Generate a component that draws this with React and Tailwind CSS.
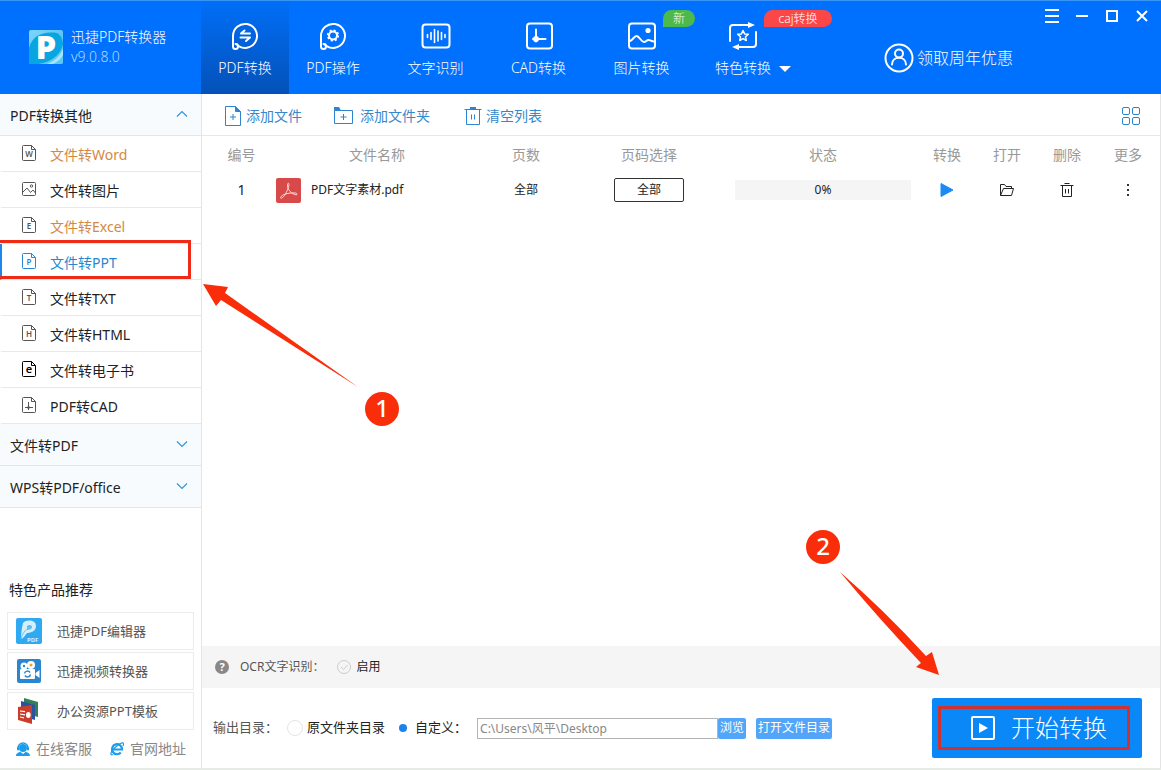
import { useState } from 'react'
import clsx from 'clsx'

const tools = [
  { name: '文件转Word', mark: 'W', hot: true },
  { name: '文件转图片', mark: 'image' },
  { name: '文件转Excel', mark: 'E', hot: true },
  { name: '文件转PPT', mark: 'P' },
  { name: '文件转TXT', mark: 'T' },
  { name: '文件转HTML', mark: 'H' },
  { name: '文件转电子书', mark: 'e', dark: true },
  { name: 'PDF转CAD', mark: 'cad' },
]

const products = [
  { name: '迅捷PDF编辑器', icon: EditorLogo },
  { name: '迅捷视频转换器', icon: VideoLogo },
  { name: '办公资源PPT模板', icon: TemplateLogo },
]

const tabs = [
  { name: 'PDF转换', icon: ConvertIcon, width: 'w-[88px]' },
  { name: 'PDF操作', icon: OperateIcon, width: 'w-[88px]' },
  { name: '文字识别', icon: OcrIcon, width: 'w-[103px] ml-[7px]' },
  { name: 'CAD转换', icon: CadIcon, width: 'w-[103px]' },
  { name: '图片转换', icon: PictureIcon, width: 'w-[103px]', badge: '新', badgeClass: 'left-[73px] w-8 bg-[#4cb94a]' },
  { name: '特色转换', icon: StarIcon, width: 'w-[100px]', badge: 'caj转换', badgeClass: 'left-[71px] w-[68px] bg-[#fb4747]', caret: true },
]

/* Header icons */

function TabSvg({ children }) {
  return (
    <svg width="30" height="30" viewBox="0 0 30 30" fill="none" stroke="white" strokeWidth="2" strokeLinecap="round" strokeLinejoin="round">
      {children}
    </svg>
  )
}

function ConvertIcon() {
  return (
    <TabSvg>
      <path d="M3 15A12 12 0 1 1 9 25.3C8 24.7 7.5 24 7 23.3" />
      <path d="M3 15v10.500a2.500 2.500 0 0 0 5 0c0-1.500-1-2.500-2.500-2.500" />
      <path d="M20 12.500H11l3.500-3M10.500 16.500h9.500l-4 3.500" />
    </TabSvg>
  )
}

function OperateIcon() {
  return (
    <TabSvg>
      <path d="M3 15A12 12 0 1 1 9 25.3C8 24.7 7.500 24 7 23.300" />
      <path d="M3 15v10.500a2.500 2.500 0 0 0 5 0c0-1.500-1-2.500-2.500-2.500" />
      <circle cx="15" cy="14.500" r="4" />
      <circle cx="15" cy="14.500" r="5.300" strokeWidth="1.600" strokeLinecap="butt" strokeDasharray="2.080 2.080" />
    </TabSvg>
  )
}

function OcrIcon() {
  return (
    <TabSvg>
      <rect x="1.500" y="3.500" width="27" height="23" rx="3" />
      <path d="M6.500 13.500v3M10 11.500v7M13.500 8.500v13M17 10v10M20.500 11.500v7M24 13.500v3" strokeWidth="1.600" />
    </TabSvg>
  )
}

function CadIcon() {
  return (
    <TabSvg>
      <rect x="3" y="2.500" width="25" height="25" rx="3" />
      <path d="M12 8.500v12M9 18h12.500" />
      <circle cx="12" cy="18" r="3" fill="white" stroke="none" />
    </TabSvg>
  )
}

function PictureIcon() {
  return (
    <TabSvg>
      <rect x="2" y="2.500" width="26" height="25" rx="3" />
      <path d="M3 20c3-1 4-5 6.500-5 3 0 4.500 6 7.500 6 2 0 2.500-2 4.500-2s3 1.500 5.500 1.500" />
      <circle cx="21" cy="9.500" r="2.600" fill="white" stroke="none" />
    </TabSvg>
  )
}

function StarIcon() {
  return (
    <TabSvg>
      <path d="M2 20V7a3 3 0 0 1 3-3h17M28 11v12a3 3 0 0 1-3 3H9" />
      <path d="M20 1l7 3-7 3zM11 23l-7 3 7 3z" fill="white" stroke="none" />
      <path d="M15 9.500l1.600 3.400 3.700.4-2.800 2.500.800 3.700-3.300-1.900-3.300 1.900.800-3.700-2.800-2.500 3.700-.4z" strokeWidth="1.500" />
    </TabSvg>
  )
}

function AppLogo() {
  return (
    <svg width="34" height="34" viewBox="0 0 34 34" className="shrink-0">
      <defs>
        <linearGradient id="appLogo" x1="0" y1="0" x2="1" y2="1">
          <stop offset="0" stopColor="#7fd6fa" />
          <stop offset="1" stopColor="#41b6f2" />
        </linearGradient>
      </defs>
      <rect width="34" height="34" rx="2" fill="url(#appLogo)" />
      <path d="M0 18C3 6 14 1 28 3c5 3 6 9 6 12-2 10-10 18-24 19H2a2 2 0 0 1-2-2z" fill="#07a5e2" />
      <path d="M34 15c-3 10-12 17-24 19h22a2 2 0 0 0 2-2z" fill="#5cc8f4" />
      <path d="M34 19c-3 7-8 12-16 15h6c4-2 8-5 10-9z" fill="#a9e6fb" />
      <text x="8" y="28" fontSize="28" fontWeight="900" fontFamily="Lato" fill="white" stroke="white" strokeWidth="2" strokeLinejoin="round">P</text>
    </svg>
  )
}

/* Sidebar icons */

function DocIcon({ mark, className }) {
  if (mark === 'image') {
    return (
      <svg width="16" height="18" viewBox="0 0 16 18" fill="none" stroke="currentColor" className={className}>
        <rect x="1.500" y="2.500" width="13" height="13" rx="1" />
        <path d="M2 12l4-4 3.500 4.500L12 10l2.500 3" />
        <circle cx="10.500" cy="6" r="1.200" />
      </svg>
    )
  }
  return (
    <svg width="16" height="18" viewBox="0 0 16 18" fill="none" stroke="currentColor" className={className}>
      <path d="M2.500 1.500h8l4 4v10a1 1 0 0 1-1 1h-11a1 1 0 0 1-1-1v-13a1 1 0 0 1 1-1z" />
      <path d="M10.500 1.500v4h4" />
      {mark === 'cad' ? (
        <>
          <path d="M7.500 6v8M4 11.500h8" />
          <circle cx="7.500" cy="11.500" r="1" fill="currentColor" />
        </>
      ) : (
        <text x="8" y="13" textAnchor="middle" fontSize={mark === 'e' ? 11 : 8} fontWeight="600" fill="currentColor" stroke="none">
          {mark}
        </text>
      )}
    </svg>
  )
}

function Chevron({ up }) {
  return (
    <svg width="12" height="8" viewBox="0 0 12 8" fill="none" stroke="#3294dc" strokeWidth="1.200" className="mb-1">
      <path d={up ? 'M1 6.500l5-5 5 5' : 'M1 1.500l5 5 5-5'} />
    </svg>
  )
}

function EditorLogo() {
  return (
    <svg width="26" height="26" viewBox="0 0 26 26">
      <rect width="26" height="26" rx="2" fill="#2ea9f2" />
      <path d="M7 5C11 1 20 2 20 8c0 5-5 7-9 7-2 2-3 5-6 6 0-6 1-12 2-16z" fill="#d3effc" />
      <path d="M11 8c2-2 5-1 5 1s-3 3-5 3z" fill="#5cbcf0" />
      <path d="M5 21c1-5 4-9 9-12" stroke="#68c2f2" fill="none" />
      <text x="11" y="24" fontSize="6" fontWeight="700" fill="#d3effc">PDF</text>
    </svg>
  )
}

function VideoLogo() {
  return (
    <svg width="26" height="26" viewBox="0 0 26 26">
      <rect x="1" y="1" width="24" height="24" rx="2" fill="#2b86d0" />
      <circle cx="8" cy="8" r="3.500" fill="white" />
      <circle cx="15" cy="7" r="4" fill="white" />
      <circle cx="8" cy="8" r="1.200" fill="#2b86d0" />
      <circle cx="15" cy="7" r="1.500" fill="#f0a030" />
      <rect x="4" y="11" width="15" height="10" rx="1" fill="white" />
      <path d="M19.500 15l4-3v8l-4-3z" fill="white" />
      <path d="M8.500 15.500a3 3 0 0 1 5.500-1M14.500 16.500a3 3 0 0 1-5.500 1" stroke="#2b86d0" strokeWidth="1.500" fill="none" />
    </svg>
  )
}

function TemplateLogo() {
  return (
    <svg width="26" height="26" viewBox="0 0 26 26">
      <path d="M8 0l14 4v15L8 15z" fill="#2f8057" />
      <path d="M5 3l14 4v15L5 18z" fill="#2a52a0" />
      <path d="M2 9l14-2v19L2 22z" fill="#cb3d2b" />
      <path d="M4 13l5 .6M4 16l5 .8M4 19l4 .8" stroke="white" strokeWidth="1.200" />
      <ellipse cx="12.300" cy="17" rx="2.300" ry="3" fill="white" />
    </svg>
  )
}

function ServiceIcon() {
  return (
    <svg width="14" height="14" viewBox="0 0 14 14">
      <path d="M2 6a5 5 0 0 1 10 0" stroke="#1b9cec" strokeWidth="1.500" fill="none" />
      <circle cx="7" cy="6" r="4" fill="#1b9cec" />
      <rect x="1" y="5" width="2" height="3.500" rx="1" fill="#1b9cec" />
      <rect x="11" y="5" width="2" height="3.500" rx="1" fill="#1b9cec" />
      <path d="M0 14c0-3 3-4 4.500-4L7 12l2.500-2c1.500 0 4.500 1 4.500 4z" fill="#1b9cec" />
    </svg>
  )
}

function BrowserIcon() {
  return (
    <svg width="14" height="14" viewBox="0 0 14 14" fill="none" stroke="#1b9cec">
      <path d="M3.500 7.500h8.500a5 5 0 1 0-1.200 3" strokeWidth="2.200" />
      <path d="M3 12.500c-3 1.500-3-2 1-6s9-7 9.500-5c.300.700 0 1.500-.500 2.500" strokeWidth="1.200" />
    </svg>
  )
}

/* Toolbar and table icons */

function AddFileIcon() {
  return (
    <svg width="18" height="20" viewBox="0 0 18 20" fill="none" stroke="#2c84d2">
      <path d="M1.500.5h10l5 5v14h-15z" />
      <path d="M11.500.5v5h5z" fill="#2c84d2" />
      <path d="M9 8v6M6 11h6" />
    </svg>
  )
}

function AddFolderIcon() {
  return (
    <svg width="20" height="20" viewBox="0 0 20 20" fill="none" stroke="#2c84d2">
      <path d="M.5 4.500h18v13H.5z" />
      <path d="M0 1h5l2 3.500H0z" fill="#2c84d2" stroke="none" />
      <path d="M9.500 8v6M6.500 11h6" />
    </svg>
  )
}

function ClearIcon() {
  return (
    <svg width="18" height="20" viewBox="0 0 18 20" fill="none" stroke="#2c84d2">
      <path d="M2.500 3.500v15h13v-15M.5 3.500h17" />
      <path d="M6 1h6v2.500H6z" fill="#2c84d2" stroke="none" />
      <path d="M7.500 8.500v5M10.500 8.500v5" />
    </svg>
  )
}

function PdfIcon() {
  return (
    <svg width="25" height="25" viewBox="0 0 25 25" className="shrink-0">
      <rect width="25" height="25" rx="2" fill="#d84a4a" />
      <path
        d="M4.500 19.500c1-3 8-5 15-4.500 2 .3 2 2 .5 1.800-4-.5-9-5-8.500-10.300.2-1.800 1.700-1.500 1.500.2-.5 4.300-4 11.300-7 13.300-.9.500-1.700.300-1.500-.5z"
        fill="none"
        stroke="#fbdcdc"
      />
    </svg>
  )
}

function OpenIcon() {
  return (
    <svg width="16" height="14" viewBox="0 0 16 14" fill="none" stroke="#222">
      <path d="M1.500 12.500v-11h4l1.500 2h5.500v2M1.500 12.500l3-7h10l-2 7z" />
    </svg>
  )
}

function DeleteIcon() {
  return (
    <svg width="14" height="16" viewBox="0 0 14 16" fill="none" stroke="#222">
      <path d="M2.500 3.500v11h9v-11M.5 3.500h13M4.500 1.500h5M5.500 7v4.500M8.500 7v4.500" />
    </svg>
  )
}

/* Step markers */

function Step({ n, className }) {
  return (
    <span className={clsx('absolute flex size-[34px] items-center justify-center rounded-full bg-[#f92d0a] pb-0.5 text-2xl font-medium text-white', className)}>
      {n}
    </span>
  )
}

function Header() {
  const [active, setActive] = useState('PDF转换')

  return (
    <header className="flex h-[94px] border-t border-[#3a94f6] bg-[#0070fe] font-light text-white">
      <div className="flex w-[201px] shrink-0 gap-2 pt-[29px] pl-[29px]">
        <AppLogo />
        <div className="-mt-[3px]">
          <h1 className="text-sm leading-5">迅捷PDF转换器</h1>
          <p className="text-sm leading-5 text-[#b5d8ff]">v9.0.8.0</p>
        </div>
      </div>

      <nav className="flex">
        {tabs.map((tab) => (
          <button
            key={tab.name}
            type="button"
            onClick={() => setActive(tab.name)}
            className={clsx(
              'relative flex shrink-0 flex-col items-center gap-[7px] pt-5 text-sm',
              tab.width,
              active === tab.name && 'bg-linear-to-b from-[#006ff8] to-[#0451b8]'
            )}
          >
            <tab.icon />
            <span>{tab.name}</span>
            {tab.caret && <span className="absolute top-[65px] left-[86px] border-x-[6px] border-t-[6px] border-x-transparent border-t-white" />}
            {tab.badge && (
              <span className={clsx('absolute top-[9px] rounded-full rounded-bl-none text-center text-xs leading-[17px]', tab.badgeClass)}>
                {tab.badge}
              </span>
            )}
          </button>
        ))}
      </nav>

      <a href="#offer" className="mt-[42px] mr-6 ml-auto flex h-[30px] items-center gap-[3px] self-start text-base">
        <svg width="30" height="30" viewBox="0 0 30 30" fill="none" stroke="white" strokeWidth="2" strokeLinecap="round">
          <circle cx="15" cy="15" r="13.500" />
          <circle cx="15" cy="10.500" r="4" />
          <path d="M8 21.500c0-9 14-9 14 0" />
        </svg>
        领取周年优惠
      </a>

      <div className="mt-[3px] mr-1 flex h-6">
        <button type="button" aria-label="菜单" className="flex w-[30px] items-center justify-center">
          <svg width="14" height="14" stroke="white" strokeWidth="2"><path d="M0 1h14M0 7h14M0 13h14" /></svg>
        </button>
        <button type="button" aria-label="最小化" className="flex w-[30px] items-center justify-center">
          <svg width="14" height="14" stroke="white" strokeWidth="2"><path d="M1 7h12" /></svg>
        </button>
        <button type="button" aria-label="最大化" className="flex w-[30px] items-center justify-center">
          <svg width="14" height="14" stroke="white" strokeWidth="2" fill="none"><path d="M2 2h10v10H2z" /></svg>
        </button>
        <button type="button" aria-label="关闭" className="flex w-[30px] items-center justify-center">
          <svg width="14" height="14" stroke="white" strokeWidth="2"><path d="M2 2l10 10M12 2L2 12" /></svg>
        </button>
      </div>
    </header>
  )
}

function SectionTitle({ children, open }) {
  return (
    <button type="button" className="flex h-[42px] w-full items-center justify-between border-b border-[#e1e6ea] bg-[#f7fbfe] pt-0.5 pr-[13px] pl-[10px] text-left">
      {children}
      <Chevron up={open} />
    </button>
  )
}

function Sidebar() {
  const [current, setCurrent] = useState('文件转PPT')

  return (
    <aside className="flex w-[202px] shrink-0 flex-col border-r border-[#e0e6ea] text-sm text-[#222]">
      <SectionTitle open>PDF转换其他</SectionTitle>
      <ul>
        {tools.map((tool) => {
          const selected = current === tool.name
          return (
            <li key={tool.name} className="relative">
              <button
                type="button"
                onClick={() => setCurrent(tool.name)}
                className={clsx(
                  'flex h-9 w-full items-center gap-[13px] border-b border-l-2 border-b-[#e6e9ec] pt-0.5 pl-[19px] text-left',
                  selected ? 'border-l-[#1c86ea] text-[#2a86cf]' : 'border-l-transparent',
                  tool.hot && 'text-[#d5893f]'
                )}
              >
                <DocIcon mark={tool.mark} className={clsx('mb-1', selected ? 'text-[#2a86cf]' : tool.dark ? 'text-black' : 'text-[#555]')} />
                {tool.name}
              </button>
              {tool.name === '文件转PPT' && (
                <span className="pointer-events-none absolute -top-1 left-0 h-[39px] w-[191px] border-[3px] border-l-0 border-[#ef2a16]" />
              )}
            </li>
          )
        })}
      </ul>
      <SectionTitle>文件转PDF</SectionTitle>
      <SectionTitle>WPS转PDF/office</SectionTitle>

      <div className="mt-auto px-[7px]">
        <h2 className="mb-3 pl-0.5 leading-5">特色产品推荐</h2>
        <ul className="space-y-0.5 text-[13px] text-[#555]">
          {products.map((product) => (
            <li key={product.name}>
              <a href="#product" className="flex h-[38px] items-center gap-[15px] border border-[#ececec] pl-2">
                <product.icon />
                {product.name}
              </a>
            </li>
          ))}
        </ul>
        <div className="flex h-[38px] items-center gap-[18px] pl-[9px] text-[#888]">
          <a href="#service" className="flex items-center gap-1.5"><ServiceIcon />在线客服</a>
          <a href="#site" className="flex items-center gap-1.5"><BrowserIcon />官网地址</a>
        </div>
      </div>
    </aside>
  )
}

function Toolbar() {
  return (
    <div className="flex h-[42px] items-center border-b border-[#e3e8ec] pt-0.5 pl-[22px] text-sm text-[#3688cc]">
      <button type="button" className="mr-8 flex items-center gap-1"><AddFileIcon />添加文件</button>
      <button type="button" className="mr-[34px] flex items-center gap-1.5"><AddFolderIcon />添加文件夹</button>
      <button type="button" className="flex items-center gap-1"><ClearIcon />清空列表</button>
      <button type="button" aria-label="视图" className="mr-5 ml-auto">
        <svg width="18" height="18" viewBox="0 0 18 18" fill="none" stroke="#2c84c4">
          <rect x=".5" y=".5" width="7" height="7" rx="1.500" />
          <rect x="10.500" y=".5" width="7" height="7" rx="1.500" />
          <rect x=".5" y="10.500" width="7" height="7" rx="1.500" />
          <rect x="10.500" y="10.500" width="7" height="7" rx="1.500" />
        </svg>
      </button>
    </div>
  )
}

function FileTable() {
  return (
    <div className="flex-1 pr-px pl-[10px]">
      <table className="w-full table-fixed text-center text-xs text-[#222]">
        <colgroup>
          <col className="w-[59px]" />
          <col />
          <col className="w-[86px]" />
          <col className="w-[160px]" />
          <col className="w-[188px]" />
          <col className="w-[60px]" />
          <col className="w-[60px]" />
          <col className="w-[60px]" />
          <col className="w-[62px]" />
        </colgroup>
        <thead>
          <tr className="h-[38px] text-sm text-[#999]">
            {['编号', '文件名称', '页数', '页码选择', '状态', '转换', '打开', '删除', '更多'].map((title) => (
              <th key={title} className="font-normal">{title}</th>
            ))}
          </tr>
        </thead>
        <tbody>
          <tr className="h-8">
            <td className="text-sm">1</td>
            <td>
              <div className="flex items-center gap-[10px] pl-[5px]"><PdfIcon />PDF文字素材.pdf</div>
            </td>
            <td>全部</td>
            <td>
              <button type="button" className="h-6 w-[70px] rounded-xs border border-[#333]">全部</button>
            </td>
            <td className="px-1.5">
              <div className="h-5 bg-[#f5f5f5] leading-5">0%</div>
            </td>
            <td>
              <button type="button" aria-label="转换" className="mx-auto block">
                <svg width="14" height="16" viewBox="0 0 14 16"><path d="M1 1.500v13l12-6.500z" fill="#1a8af5" stroke="#1a8af5" strokeLinejoin="round" /></svg>
              </button>
            </td>
            <td><button type="button" aria-label="打开" className="mx-auto block"><OpenIcon /></button></td>
            <td><button type="button" aria-label="删除" className="mx-auto block"><DeleteIcon /></button></td>
            <td>
              <button type="button" aria-label="更多" className="mx-auto block">
                <svg width="4" height="14" fill="#333"><path d="M1 1h2v2H1zM1 6h2v2H1zM1 11h2v2H1z" /></svg>
              </button>
            </td>
          </tr>
        </tbody>
      </table>
    </div>
  )
}

function OutputBar() {
  const [target, setTarget] = useState('custom')
  const [path, setPath] = useState('C:\\Users\\风平\\Desktop')
  const radio = 'mr-1 grid size-4 appearance-none place-content-center rounded-full before:size-2 before:rounded-full checked:before:bg-[#1b84ea] not-checked:border not-checked:border-[#e4e4e4]'

  return (
    <div className="flex h-20 items-center pr-[18px] pl-[11px] text-[13px] text-[#222]">
      <span className="mr-[9px] text-[#555]">输出目录：</span>
      <label className="mr-[10px] flex items-center">
        <input type="radio" name="target" className={radio} checked={target === 'source'} onChange={() => setTarget('source')} />
        原文件夹目录
      </label>
      <label className="mr-[10px] flex items-center">
        <input type="radio" name="target" className={radio} checked={target === 'custom'} onChange={() => setTarget('custom')} />
        自定义：
      </label>
      <input
        type="text"
        aria-label="输出路径"
        value={path}
        onChange={(e) => setPath(e.target.value)}
        className="h-[21px] w-[241px] border border-[#b4b4b4] pl-0.5 text-xs text-[#888]"
      />
      <button type="button" className="mr-[10px] h-[21px] rounded-xs bg-[#52a5f8] px-0.5 text-xs text-white">浏览</button>
      <button type="button" className="h-[21px] rounded-xs bg-[#52a5f8] px-0.5 text-xs text-white">打开文件目录</button>

      <button type="button" className="relative ml-auto flex h-[60px] w-[210px] items-center gap-4 rounded-xs bg-[#0b88f8] pl-[39px] text-2xl font-light text-white">
        <svg width="24" height="24" viewBox="0 0 24 24">
          <rect x="1" y="1" width="22" height="22" rx="1" fill="none" stroke="white" strokeWidth="2" />
          <path d="M8 7v10l9-5z" fill="white" />
        </svg>
        开始转换
        <span className="absolute top-2 left-1.5 h-11 w-[192px] border-[3px] border-[#d0332f]" />
      </button>
    </div>
  )
}

export default function App() {
  return (
    <div className="flex min-h-screen flex-col border-b-2 border-[#e6ebe6] bg-white font-['Noto_Sans','Noto_Sans_CJK_SC',sans-serif]">
      <Header />
      <div className="flex flex-1">
        <Sidebar />
        <main className="relative flex min-w-0 flex-1 flex-col border-r border-[#e4e4e4]">
          <Toolbar />
          <FileTable />

          <div className="flex h-[42px] items-center bg-[#f5f5f5] pl-[13px] text-xs text-[#555]">
            <span className="mr-[11px] flex size-[14px] items-center justify-center rounded-full bg-[#888] text-[11px] font-bold text-white">?</span>
            <span className="mr-[13px]">OCR文字识别：</span>
            <label className="flex items-center gap-[5px] text-[#222]">
              <span className="grid size-[14px]">
                <input type="checkbox" className="col-start-1 row-start-1 size-[14px] appearance-none rounded-full border border-[#ccc]" />
                <svg width="14" height="14" fill="none" stroke="#ccc" className="col-start-1 row-start-1"><path d="M4 7l2.500 2.500L10.500 5" /></svg>
              </span>
              启用
            </label>
          </div>
          <OutputBar />

          <svg width="156" height="104" viewBox="0 0 156 104" className="pointer-events-none absolute top-[190px] left-px">
            <path d="M0 0l25 3-3 6L155 103 18 16l-5 6z" fill="#f92d0a" />
          </svg>
          <Step n={1} className="top-[298px] left-[163px]" />
          <Step n={2} className="right-[320px] bottom-[204px]" />
          <svg width="99" height="103" viewBox="0 0 99 103" className="pointer-events-none absolute right-[221px] bottom-[93px]">
            <path d="M0 0Q44 38 86 84l6-4 7 23-23-8 5-4Q40 48 0 0z" fill="#f92d0a" />
          </svg>
        </main>
      </div>
    </div>
  )
}
